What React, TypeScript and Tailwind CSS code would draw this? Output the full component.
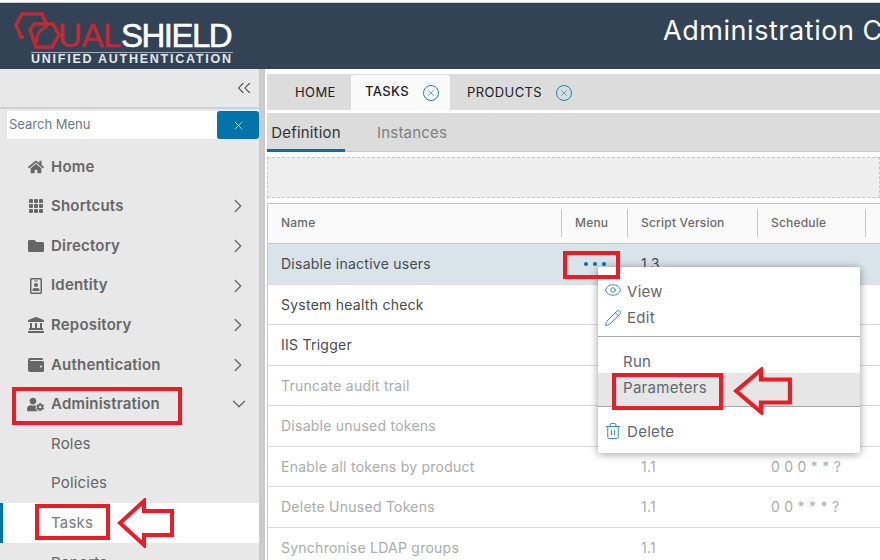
import { ChevronRight, ChevronDown, ChevronsLeft, X, Eye, Pencil, Trash2 } from 'lucide-react';
import { FaHome, FaFolder, FaRegIdBadge, FaLandmark, FaWallet, FaUserCog } from 'react-icons/fa';
import { BsGrid3X3GapFill } from 'react-icons/bs';

const menu = [
  { label: 'Home', icon: FaHome },
  { label: 'Shortcuts', icon: BsGrid3X3GapFill, more: true },
  { label: 'Directory', icon: FaFolder, more: true },
  { label: 'Identity', icon: FaRegIdBadge, more: true },
  { label: 'Repository', icon: FaLandmark, more: true },
  { label: 'Authentication', icon: FaWallet, more: true },
];

const rows = [
  { name: 'Disable inactive users', version: '1.3', schedule: '', selected: true },
  { name: 'System health check', version: '', schedule: '' },
  { name: 'IIS Trigger', version: '', schedule: '' },
  { name: 'Truncate audit trail', version: '', schedule: '', muted: true },
  { name: 'Disable unused tokens', version: '', schedule: '', muted: true },
  { name: 'Enable all tokens by product', version: '1.1', schedule: '0 0 0 * * ?', muted: true },
  { name: 'Delete Unused Tokens', version: '1.1', schedule: '0 0 * * * ?', muted: true },
  { name: 'Synchronise LDAP groups', version: '1.1', schedule: '', muted: true },
];

function Annotation({ className }: { className: string }) {
  return <div className={`absolute border-[4px] border-[#ed1c24] ${className}`} />;
}

function Arrow({ className }: { className: string }) {
  return (
    <svg className={`absolute ${className}`} viewBox="0 0 58 50" preserveAspectRatio="none">
      <path d="M3 25 L27 3 L27 13 L55 13 L55 37 L27 37 L27 47 Z" fill="none" stroke="#ed1c24" strokeWidth="4" />
    </svg>
  );
}

function CloseCircle() {
  return (
    <span className="flex h-[16px] w-[16px] items-center justify-center rounded-full border border-[#1a85b5] text-[#1a85b5]">
      <X size={10} strokeWidth={1.5} />
    </span>
  );
}

export default function App() {
  return (
    <div className="relative h-[560px] w-[880px] overflow-hidden bg-white font-['Inter',sans-serif]">
      {/* Header */}
      <div className="mt-[2px] flex h-[67px] items-start overflow-hidden border-t border-[#cccccc] bg-[#314354]">
        <div className="relative h-[66px] w-[240px] shrink-0">
          <svg className="absolute left-0 top-0" width="64" height="50" viewBox="0 0 64 50" fill="none" stroke="#bf2a33" strokeWidth="3.5">
            <path d="M24 34 L21 34 L16 22 L22 11 L42 11 L46 20" />
            <path d="M34 21 L53 21 L59 32 L52 44 L36 44 L30 27 Z" />
            <path d="M37 40 C36 32 40 26 48 23" strokeWidth="2.5" />
          </svg>
          <div className="absolute left-[58px] top-[15px] whitespace-nowrap font-['Liberation_Sans',sans-serif] text-[33px] leading-[36px] [-webkit-text-stroke:0.6px]">
            <span className="tracking-[-0.4px] text-[#bf2a33]">UAL</span>
            <span className="tracking-[-1.5px] text-white">SHIELD</span>
          </div>
          <div className="absolute left-[31px] top-[49px] w-[202px] whitespace-nowrap border-t border-[#a8aeb5] font-['Liberation_Sans',sans-serif] text-[12.5px] font-bold leading-[12px] tracking-[1.75px] text-[#e8e8e8]">
            UNIFIED AUTHENTICATION
          </div>
        </div>
        <div className="ml-[423px] mt-[10px] whitespace-nowrap text-[27px] leading-[36px] tracking-[0.55px] text-white">Administration Console</div>
      </div>

      <div className="flex h-[491px]">
        {/* Sidebar */}
        <aside className="flex h-full w-[265px] shrink-0 border-r-[6px] border-[#cbcbcb] bg-[#e8e8e8]">
          <div className="w-full">
            <div className="flex h-[40px] items-center justify-end border-b-2 border-[#d0d0d0] pr-[4px]">
              <ChevronsLeft size={22} strokeWidth={1.1} className="text-[#333333]" />
            </div>
            <div className="mt-[2px] flex h-[28px] pl-[7px]">
              <div className="flex h-[28px] flex-1 items-center bg-white pl-[2px] text-[13px] text-[#6f7a85]">Search Menu</div>
              <button className="flex h-[28px] w-[42px] items-center justify-center rounded-[3px] bg-[#0073a8] text-white">
                <X size={13} strokeWidth={1.3} />
              </button>
            </div>
            <nav className="mt-[8px] text-[15px] tracking-[0.2px] text-[#666666]">
              {menu.map(({ label, icon: Icon, more }) => (
                <div key={label} className="flex h-[39.6px] items-center pl-[27px] pr-[10px]">
                  <span className="mr-[7px] flex w-[17px] shrink-0 justify-center">
                    <Icon size={16} />
                  </span>
                  <span className="flex-1 font-semibold">{label}</span>
                  {more && <ChevronRight size={22} strokeWidth={1.4} />}
                </div>
              ))}
              <div className="flex h-[39.6px] items-center pl-[27px] pr-[9px]">
                <span className="mr-[7px] flex w-[17px] shrink-0 justify-center">
                  <FaUserCog size={17} />
                </span>
                <span className="flex-1 font-semibold">Administration</span>
                <ChevronDown size={22} strokeWidth={1.4} />
              </div>
              <div className="flex h-[39.6px] items-center pl-[51px]">Roles</div>
              <div className="flex h-[39.6px] items-center pl-[51px]">Policies</div>
              <div className="flex h-[40px] items-center border-l-[3px] border-[#0073a8] bg-white pl-[48px] text-[#777777]">Tasks</div>
              <div className="flex h-[39.6px] items-center pl-[51px]">Reports</div>
            </nav>
          </div>
        </aside>

        {/* Main */}
        <main className="ml-[2px] min-w-0 flex-1">
          <div className="mt-[5px] flex h-[36px] items-end bg-[#dcdcdc] pt-[1px] text-[13px] tracking-[0.4px] text-[#222222]">
            <div className="flex h-full w-[84px] items-center pl-[28px]">HOME</div>
            <div className="flex h-[35px] w-[99px] items-center rounded-t-[3px] bg-[#fafafa] pl-[14px] font-medium">
              <span className="mb-[2px] mr-[14px]">TASKS</span>
              <CloseCircle />
            </div>
            <div className="flex h-full items-center gap-[14px] pl-[17px]">
              PRODUCTS
              <CloseCircle />
            </div>
          </div>
          <div className="mt-[3px] flex h-[39px] border-b border-[#c8c8c8] bg-[#dcdcdc] text-[15px] tracking-[0.2px]">
            <div className="flex h-[39px] w-[78px] items-center justify-center border-b-[3px] border-[#0073a8] pt-[4px] text-[#333333]">Definition</div>
            <div className="ml-[32px] flex items-center pt-[2px] text-[#808080]">Instances</div>
          </div>
          <div className="mt-[5px] h-[41px] border border-dashed border-[#c8c8c8] bg-[#eeeeee]" />
          <div className="mt-[5px] border-l border-t border-[#c8c8c8] bg-white text-[14px] tracking-[0.25px]">
            <div className="flex h-[40px] items-center border-b border-[#c8c8c8] bg-[#fafafa] pb-[2px] text-[12px] font-medium tracking-[0.2px] text-[#6b6b6b]">
              <div className="flex h-[28px] w-[294px] items-center border-r border-[#c8c8c8] pl-[13px]">Name</div>
              <div className="flex h-[28px] w-[66px] items-center border-r border-[#c8c8c8] pl-[13px]">Menu</div>
              <div className="flex h-[28px] w-[130px] items-center border-r border-[#c8c8c8] pl-[13px]">Script Version</div>
              <div className="flex h-[28px] w-[108px] items-center border-r border-[#c8c8c8] pl-[13px]">Schedule</div>
            </div>
            {rows.map((row) => (
              <div
                key={row.name}
                className={`flex h-[40.5px] items-center border-b border-[#dcdcdc] ${row.selected ? 'bg-[#d8e3ea]' : ''} ${row.muted ? 'text-[#ababab]' : 'text-[#4a4a4a]'}`}
              >
                <div className="w-[294px] pl-[13px]">{row.name}</div>
                <div className="flex w-[66px] justify-center gap-[5px] pr-[1px]">
                  {row.selected && [0, 1, 2].map((d) => <span key={d} className="h-[4px] w-[4px] rounded-full bg-[#0073a8]" />)}
                </div>
                <div className="w-[130px] pl-[13px]">{row.version}</div>
                <div className="w-[108px] pl-[13px]">{row.schedule}</div>
              </div>
            ))}
          </div>
        </main>
      </div>

      {/* Context menu */}
      <div className="absolute left-[598px] top-[267px] h-[186px] w-[262px] rounded-[2px] bg-white pt-[12px] text-[15px] tracking-[0.3px] text-[#5f6770] shadow-[0_1px_8px_rgba(0,0,0,0.4)]">
        <div className="flex h-[26px] items-center pl-[6px] text-[#666666]">
          <Eye size={18} strokeWidth={1.2} className="mb-[5px] mr-[5px] text-[#1a85b5]" />
          View
        </div>
        <div className="flex h-[26px] items-center pl-[6px] text-[#666666]">
          <Pencil size={18} strokeWidth={1.2} className="mr-[5px] text-[#1a85b5]" />
          Edit
        </div>
        <div className="mt-[5px] border-t border-[#a8a8a8]" />
        <div className="mt-[15px] flex h-[21px] items-center pl-[25px]">Run</div>
        <div className="flex h-[34px] items-center border-b border-[#a8a8a8] bg-[#e6e6e6] pb-[2px] pl-[25px]">Parameters</div>
        <div className="mt-[12px] flex h-[26px] items-center pl-[6px]">
          <Trash2 size={18} strokeWidth={1.2} className="mb-[2px] mr-[5px] text-[#1a85b5]" />
          Delete
        </div>
      </div>

      {/* Red annotations */}
      <Annotation className="left-[12px] top-[387px] h-[38px] w-[170px]" />
      <Annotation className="left-[35px] top-[504px] h-[36px] w-[75px]" />
      <Annotation className="left-[563px] top-[251px] h-[28px] w-[57px]" />
      <Annotation className="left-[612px] top-[373px] h-[37px] w-[111px]" />
      <Arrow className="left-[117px] top-[498px] h-[50px] w-[58px]" />
      <Arrow className="left-[733px] top-[367px] h-[48px] w-[60px]" />
    </div>
  );
}
